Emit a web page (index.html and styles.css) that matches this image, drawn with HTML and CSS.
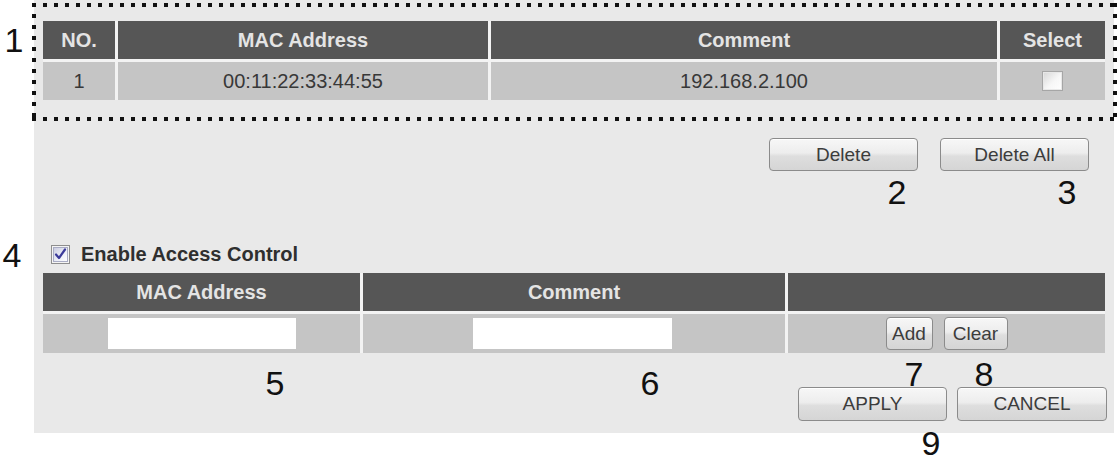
FILE: index.html
```html
<!DOCTYPE html>
<html lang="en">
<head>
<meta charset="utf-8">
<title>MAC Access Control</title>
<link rel="stylesheet" href="styles.css">
</head>
<body>
<div class="page">
  <div class="panel">
    <div class="marked">
      <div class="grid list-grid">
        <div class="cell head">NO.</div>
        <div class="cell head">MAC Address</div>
        <div class="cell head">Comment</div>
        <div class="cell head">Select</div>
        <div class="cell data">1</div>
        <div class="cell data">00:11:22:33:44:55</div>
        <div class="cell data">192.168.2.100</div>
        <div class="cell data"><span class="box"></span></div>
      </div>
    </div>

    <div class="actions delete-row">
      <button class="btn btn-delete" type="button">Delete</button>
      <button class="btn btn-delete" type="button">Delete All</button>
    </div>

    <label class="enable-row">
      <svg class="check" width="19" height="19" viewBox="0 0 19 19" aria-hidden="true">
        <defs>
          <linearGradient id="chk" x1="0" y1="0" x2="1" y2="1">
            <stop offset="0" stop-color="#c9cbe0"/>
            <stop offset="0.6" stop-color="#eef0f8"/>
            <stop offset="1" stop-color="#ffffff"/>
          </linearGradient>
        </defs>
        <rect x="0.5" y="0.5" width="18" height="18" fill="#f4f4f4" stroke="#8e8e8e"/>
        <rect x="2.5" y="2.5" width="14" height="14" fill="url(#chk)" stroke="#a9acc4"/>
        <path d="M5 9.5 L8 13 L14 4.5" fill="none" stroke="#3b3a9a" stroke-width="2.2" stroke-linecap="round" stroke-linejoin="round"/>
      </svg>
      <span class="enable-text">Enable Access Control</span>
    </label>

    <div class="grid add-grid">
      <div class="cell head">MAC Address</div>
      <div class="cell head">Comment</div>
      <div class="cell head"></div>
      <div class="cell data"><input class="field field-mac" type="text"></div>
      <div class="cell data"><input class="field field-comment" type="text"></div>
      <div class="cell data pair">
        <button class="btn btn-small btn-add" type="button">Add</button>
        <button class="btn btn-small btn-clear" type="button">Clear</button>
      </div>
    </div>

    <div class="actions submit-row">
      <button class="btn btn-apply" type="button">APPLY</button>
      <button class="btn btn-cancel" type="button">CANCEL</button>
    </div>
  </div>

  <span class="callout c1">1</span>
  <span class="callout c2">2</span>
  <span class="callout c3">3</span>
  <span class="callout c4">4</span>
  <span class="callout c5">5</span>
  <span class="callout c6">6</span>
  <span class="callout c7">7</span>
  <span class="callout c8">8</span>
  <span class="callout c9">9</span>
</div>
</body>
</html>
```

FILE: styles.css
```css
* {
  box-sizing: border-box;
}

html,
body {
  margin: 0;
  background: #ffffff;
}

body {
  font-family: "Liberation Sans", Arial, sans-serif;
  color: #333333;
}

.page {
  position: relative;
  width: 1118px;
  height: 462px;
  overflow: hidden;
}

/* light grey settings panel */
.panel {
  margin-left: 34px;
  width: 1080px;
  padding: 3px 9px 12px 9px;
  background: #e9e9e9;
}

/* dotted frame around the filter list */
.marked {
  margin: 0 -12px 0 -11px;
  padding: 18px 12px 21px 11px;
  background:
    linear-gradient(90deg, #111 4px, transparent 4px) 0 0 / 11px 4px repeat-x,
    linear-gradient(90deg, #111 4px, transparent 4px) 0 100% / 11px 4px repeat-x,
    linear-gradient(180deg, #111 4px, transparent 4px) 0 0 / 4px 11px repeat-y,
    linear-gradient(180deg, #111 4px, transparent 4px) 100% 0 / 4px 11px repeat-y;
}

/* tables drawn as grids; the gap shows the light rule between cells */
.grid {
  display: grid;
  gap: 3px;
  background: #f3f3f3;
}

.list-grid {
  grid-template-columns: 72px 370px 506px 105px;
  grid-template-rows: 38px 38px;
}

.add-grid {
  grid-template-columns: 317px 422px 317px;
  grid-template-rows: 38px 39px;
  margin-top: 8px;
}

.cell {
  display: flex;
  align-items: center;
  justify-content: center;
  font-size: 20px;
  white-space: nowrap;
}

.head {
  background: #565656;
  color: #e4e4e4;
  font-weight: bold;
}

.data {
  background: #c5c5c5;
  color: #383838;
}

.box {
  display: block;
  width: 21px;
  height: 20px;
  border: 1px solid #a6a6a6;
  background: linear-gradient(135deg, #d6d6d6 0%, #f7f7f7 55%, #ffffff 100%);
  box-shadow: inset 0 0 0 1px #e8e8e8;
}

.field {
  height: 31px;
  border: none;
  background: #ffffff;
  padding: 0 4px;
  font: inherit;
}

.field-mac {
  width: 188px;
}

.field-comment {
  width: 199px;
  margin-left: -3px;
}

.pair {
  gap: 11px;
}

/* buttons */
.actions {
  display: flex;
  justify-content: flex-end;
}

.btn {
  height: 34px;
  border: 1px solid #8b8b8b;
  border-radius: 4px;
  background: linear-gradient(180deg, #f7f7f7 0%, #ededed 45%, #dedede 55%, #d5d5d5 100%);
  box-shadow: inset 0 1px 0 #ffffff;
  color: #3c3c3c;
  font-family: "Liberation Sans", Arial, sans-serif;
  font-size: 19px;
  padding: 0;
}

.delete-row {
  margin-top: 17px;
  padding-right: 16px;
  gap: 22px;
}

.btn-delete {
  width: 149px;
  height: 33px;
}

.btn-small {
  height: 33px;
}

.btn-add {
  width: 47px;
}

.btn-clear {
  width: 64px;
}

.submit-row {
  margin-top: 34px;
  margin-right: -2px;
  gap: 10px;
}

.btn-apply {
  width: 149px;
}

.btn-cancel {
  width: 150px;
}

/* access control switch */
.enable-row {
  display: flex;
  align-items: center;
  height: 22px;
  margin-top: 72px;
  padding-left: 8px;
  gap: 11px;
}

.check {
  display: block;
  flex: none;
}

.enable-text {
  font-size: 20px;
  font-weight: bold;
  color: #2f2f2f;
}

/* numbered callouts */
.callout {
  position: absolute;
  width: 24px;
  height: 28px;
  font-size: 34px;
  line-height: 28px;
  text-align: center;
  color: #111111;
}

.c1 { left: 2px;    top: 26px; }
.c2 { left: 885px;  top: 178px; }
.c3 { left: 1055px; top: 178px; }
.c4 { left: 0;      top: 241px; }
.c5 { left: 263px;  top: 369px; }
.c6 { left: 638px;  top: 369px; }
.c7 { left: 902px;  top: 360px; }
.c8 { left: 972px;  top: 360px; }
.c9 { left: 919px;  top: 429px; }
```
